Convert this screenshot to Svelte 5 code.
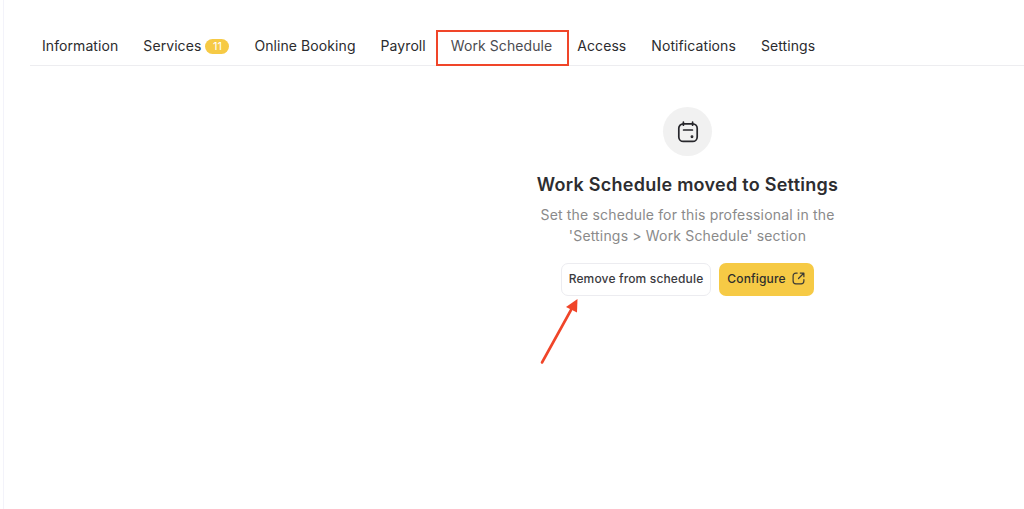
<script>
  const tabs = [
    { label: 'Information' },
    { label: 'Services', badge: '11' },
    { label: 'Online Booking' },
    { label: 'Payroll' },
    { label: 'Work Schedule', active: true },
    { label: 'Access' },
    { label: 'Notifications' },
    { label: 'Settings' }
  ];
</script>

<div class="page">
  <nav class="tabs">
    {#each tabs as t}
      <span class="tab" class:active={t.active}>
        {t.label}
        {#if t.badge}<span class="badge">{t.badge}</span>{/if}
      </span>
    {/each}
  </nav>

  <section class="empty">
    <div class="circle">
      <svg width="22" height="22" viewBox="0 0 22 22" fill="none" stroke="#26262b" stroke-width="1.7" stroke-linecap="round" stroke-linejoin="round">
        <rect x="1.8" y="2.8" width="18.4" height="17.6" rx="4.5" />
        <path d="M6.4 1.2v3M15.6 1.2v3M6.6 9h8.8" />
        <circle cx="15" cy="15.8" r="0.6" fill="#26262b" />
      </svg>
    </div>
    <h1>Work Schedule moved to Settings</h1>
    <p>Set the schedule for this professional in the<br />'Settings &gt; Work Schedule' section</p>
    <div class="actions">
      <button class="btn ghost">Remove from schedule</button>
      <button class="btn primary">
        Configure
        <svg width="13" height="13" viewBox="0 0 14 14" fill="none" stroke="#3a3a36" stroke-width="1.3" stroke-linecap="round" stroke-linejoin="round">
          <path d="M5.6 1.2H4.2A3 3 0 0 0 1.2 4.2v5.6a3 3 0 0 0 3 3h5.6a3 3 0 0 0 3-3V8.2" />
          <path d="M7 7l5.6-5.6M8.9 1.2h3.9v3.9" />
        </svg>
      </button>
    </div>
  </section>

  <div class="highlight"></div>
  <svg class="arrow" width="50" height="72" viewBox="0 0 50 72" fill="none">
    <path d="M2 67.5L31 15" stroke="#f04529" stroke-width="2.6" stroke-linecap="round" />
    <path d="M37.5 4L26 12L37 17.5Z" fill="#f04529" />
  </svg>
</div>

<style>
  :global(body) {
    margin: 0;
    background: #fff;
  }

  .page {
    position: relative;
    box-sizing: border-box;
    height: 509px;
    margin-left: 3px;
    padding: 26px 0 0 26px;
    overflow: hidden;
    border-left: 1px solid #f3f3fa;
    font-family: Inter, "Liberation Sans", sans-serif;
    color: #2b2b2e;
  }

  .tabs {
    display: flex;
    gap: 25px;
    height: 40px;
    box-sizing: border-box;
    padding: 0 0 0 12px;
    border-bottom: 1px solid #ededf0;
    font-size: 14px;
    line-height: 40px;
    white-space: nowrap;
  }

  .tab {
    display: flex;
    align-items: center;
    gap: 4px;
    height: 40px;
    letter-spacing: 0.08px;
  }

  .tab.active {
    color: #4b4b50;
  }

  .badge {
    display: inline-block;
    width: 24px;
    height: 15px;
    border-radius: 8px;
    background: #f6ca45;
    color: #fff;
    font-size: 11px;
    line-height: 15px;
    text-align: center;
    letter-spacing: 0;
  }

  .empty {
    display: flex;
    flex-direction: column;
    align-items: center;
    width: 400px;
    margin: 41px 0 0 457.5px;
    text-align: center;
  }

  .circle {
    display: flex;
    align-items: center;
    justify-content: center;
    width: 49px;
    height: 49px;
    border-radius: 50%;
    background: #f1f1f1;
  }

  h1 {
    margin: 18px 0 0;
    font-size: 18px;
    line-height: 22px;
    font-weight: 600;
    color: #2d2d30;
    letter-spacing: 0.27px;
    white-space: nowrap;
  }

  p {
    margin: 9px 0 0;
    font-size: 14px;
    line-height: 20.5px;
    color: #8a8a8a;
    letter-spacing: 0.17px;
  }

  .actions {
    display: flex;
    gap: 8px;
    margin-top: 17px;
  }

  .btn {
    display: flex;
    align-items: center;
    gap: 6px;
    box-sizing: border-box;
    height: 33px;
    border-radius: 7px;
    padding: 0 0 2px;
    font-family: inherit;
    font-size: 12px;
    font-weight: 500;
    color: #3a3a3e;
    letter-spacing: 0.15px;
    justify-content: center;
  }

  .ghost {
    width: 150px;
    background: #fff;
    border: 1px solid #ececf0;
  }

  .primary {
    width: 95px;
    background: #f6ca45;
    border: none;
    color: #2f2f2c;
    padding-right: 1px;
  }

  .highlight {
    position: absolute;
    left: 432px;
    top: 30px;
    box-sizing: border-box;
    width: 133px;
    height: 36px;
    border: 2.5px solid #f04529;
  }

  .arrow {
    position: absolute;
    left: 536px;
    top: 295px;
  }
</style>
